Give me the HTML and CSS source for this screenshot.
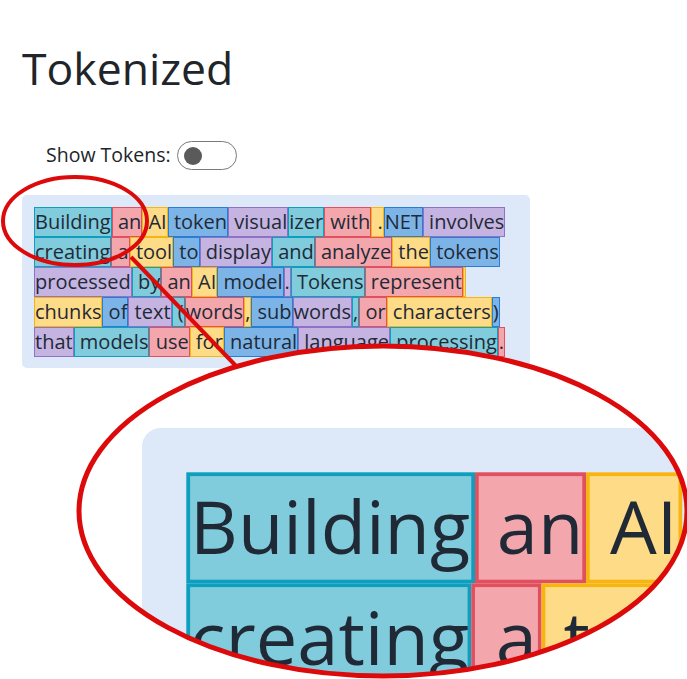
FILE: index.html
```html
<!DOCTYPE html>
<html lang="en">
<head>
<meta charset="utf-8">
<title>Tokenized</title>
<link rel="stylesheet" href="styles.css">
</head>
<body>
<main class="page">
  <h1 class="title">Tokenized</h1>
  <div class="toggle-row">
    <span class="toggle-label">Show Tokens:</span>
    <span class="switch"><span class="knob"></span></span>
  </div>
  <div class="panel">
    <div class="line"><span class="tok c0">Building</span><span class="tok c1"> an</span><span class="tok c2"> AI</span><span class="tok c3"> token</span><span class="tok c4"> visual</span><span class="tok c0">izer</span><span class="tok c1"> with</span><span class="tok c2"> .</span><span class="tok c3">NET</span><span class="tok c4"> involves</span></div>
    <div class="line"><span class="tok c0">creating</span><span class="tok c1"> a</span><span class="tok c2"> tool</span><span class="tok c3"> to</span><span class="tok c4"> display</span><span class="tok c0"> and</span><span class="tok c1"> analyze</span><span class="tok c2"> the</span><span class="tok c3"> tokens</span></div>
    <div class="line"><span class="tok c4">processed</span><span class="tok c0"> by</span><span class="tok c1"> an</span><span class="tok c2"> AI</span><span class="tok c3"> model</span><span class="tok c4">.</span><span class="tok c0"> Tokens</span><span class="tok c1"> represent</span><span class="tok c2 sliver"></span></div>
    <div class="line"><span class="tok c2">chunks</span><span class="tok c3"> of</span><span class="tok c4"> text</span><span class="tok c0"> (</span><span class="tok c1">words</span><span class="tok c2">,</span><span class="tok c3"> sub</span><span class="tok c4">words</span><span class="tok c0">,</span><span class="tok c1"> or</span><span class="tok c2"> characters</span><span class="tok c3">)</span></div>
    <div class="line"><span class="tok c4">that</span><span class="tok c0"> models</span><span class="tok c1"> use</span><span class="tok c2"> for</span><span class="tok c3"> natural</span><span class="tok c4"> language</span><span class="tok c0"> processing</span><span class="tok c1">.</span></div>
  </div>
</main>

<div class="lens">
  <div class="lens-content">
    <div class="panel lens-panel">
      <div class="line"><span class="tok c0">Building</span><span class="tok c1"> an</span><span class="tok c2"> AI</span></div>
      <div class="line"><span class="tok c0">creating</span><span class="tok c1"> a</span><span class="tok c2"> tool</span></div>
    </div>
  </div>
</div>

<svg class="annot" width="687" height="679" viewBox="0 0 687 679" xmlns="http://www.w3.org/2000/svg">
  <ellipse cx="75" cy="221" rx="72" ry="44" fill="none" stroke="#dc0a0a" stroke-width="4"/>
  <line x1="131" y1="257" x2="237" y2="367" stroke="#dc0a0a" stroke-width="4"/>
  <ellipse cx="383" cy="511" rx="304" ry="165" fill="none" stroke="#dc0a0a" stroke-width="5"/>
</svg>
</body>
</html>
```

FILE: styles.css
```css
html, body {
  margin: 0;
  padding: 0;
  background: #ffffff;
}

html {
  overflow: hidden;
}

body {
  width: 687px;
  height: 679px;
  overflow: hidden;
  position: relative;
  font-family: "Open Sans", "Noto Sans", sans-serif;
  color: #212529;
}

.page {
  padding: 41px 0 0 22px;
}

.title {
  margin: 0;
  font-size: 44.5px;
  line-height: 53px;
  font-weight: 400;
  color: #212529;
}

.toggle-row {
  display: flex;
  align-items: center;
  gap: 6px;
  margin-top: 47px;
  padding-left: 24px;
  height: 29px;
}

.toggle-label {
  font-size: 19.5px;
  line-height: 26px;
  margin-top: -2px;
}

.switch {
  display: flex;
  align-items: center;
  box-sizing: border-box;
  width: 60px;
  height: 29px;
  border: 1px solid #7a7a7a;
  border-radius: 15px;
  padding-left: 6px;
  background: #fff;
}

.knob {
  width: 18px;
  height: 18px;
  border-radius: 50%;
  background: #5a5a5a;
}

.panel {
  box-sizing: border-box;
  width: 508px;
  margin-top: 25px;
  padding: 12px 0 11px 12px;
  background: #dde9f8;
  border-radius: 5px;
}

.line {
  display: flex;
  height: 30px;
}

.tok {
  box-sizing: border-box;
  height: 30px;
  line-height: 28px;
  border: 1px solid;
  white-space: pre;
  font-size: 20px;
  color: #1f2a36;
}

.sliver {
  width: 3px;
}

.c0 { background: #80cbdc; border-color: #0e9fbe; }
.c1 { background: #f4a6ad; border-color: #e0505e; }
.c2 { background: #fedb86; border-color: #f7b512; }
.c3 { background: #7db4e8; border-color: #2a7ed2; }
.c4 { background: #c5b4e1; border-color: #8d72c6; }

.lens {
  position: absolute;
  left: 0;
  top: 0;
  width: 687px;
  height: 679px;
  overflow: hidden;
  background: #ffffff;
  clip-path: ellipse(304px 165px at 383px 511px);
}

.lens-content {
  position: absolute;
  left: 142px;
  top: 428px;
  transform: scale(3.7);
  transform-origin: 0 0;
}

.lens-panel {
  margin-top: 0;
  width: 148px;
  height: 68px;
  overflow: hidden;
}

.annot {
  position: absolute;
  left: 0;
  top: 0;
  pointer-events: none;
}
```
